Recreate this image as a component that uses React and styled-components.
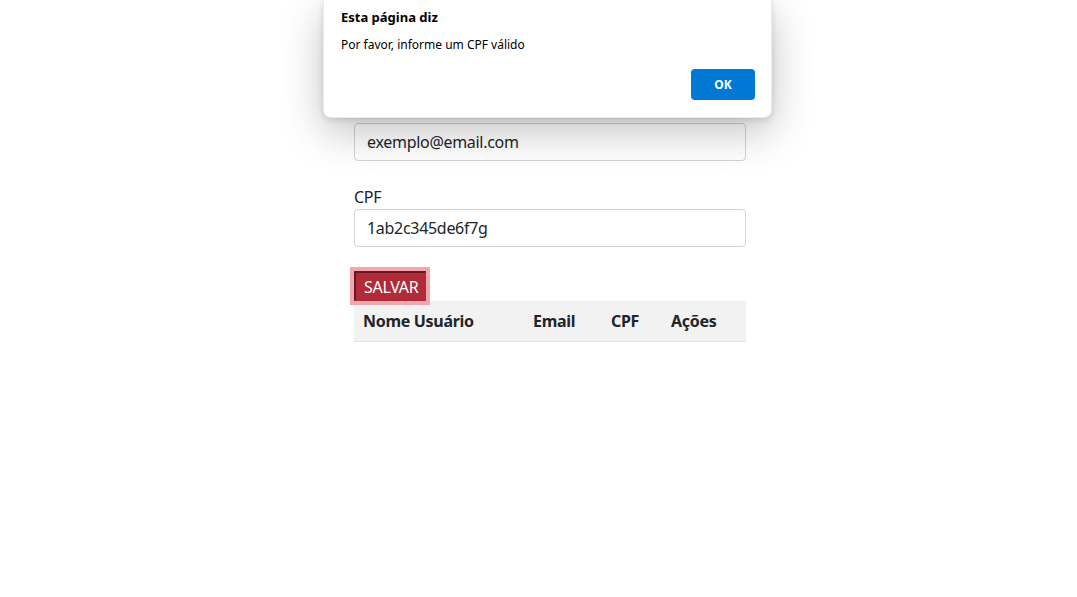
import React from 'react';
import styled, { createGlobalStyle } from 'styled-components';

const GlobalStyle = createGlobalStyle`
  html, body {
    margin:0;
    padding:0;
    background:#fff;
    font-family:"Segoe UI","Noto Sans",sans-serif;
    color:#212529;
  }
  *{ box-sizing:border-box; }
`

const Page = styled.div`
  position:relative;
  width:1077px;
  height:597px;
  overflow:hidden;
`

const Form = styled.form`
  width:392px;
  margin-left:354px;
  padding-top:99px;
  letter-spacing:-0.3px;
`

const Field = styled.div`
  margin-bottom:24px;
`

const Label = styled.label`
  display:block;
  font-size:16px;
  line-height:24px;
`

const Input = styled.input`
  display:block;
  width:100%;
  height:38px;
  padding:6px 12px;
  font:inherit;
  font-size:16px;
  letter-spacing:inherit;
  color:#212529;
  background:#fff;
  border:1px solid #ced4da;
  border-radius:4px;
  outline:none;
`

const SaveButton = styled.button`
  display:block;
  height:30px;
  padding:0 7px 0 8px;
  font:inherit;
  font-size:16px;
  line-height:24px;
  letter-spacing:inherit;
  color:#fff;
  background:#b02a37;
  border-style:solid;
  border-width:2px 1px 1px 2px;
  border-color:#6a1820 #b02a37 #b02a37 #6a1820;
  box-shadow:0 0 0 4px #f0a7ae;
  position:relative;
  z-index:1;
`

const Table = styled.table`
  width:100%;
  border-collapse:collapse;
`

const Th = styled.th`
  width:${p => p.$w}px;
  padding:8px 9px;
  height:40px;
  text-align:left;
  font-size:16px;
  font-weight:700;
  background:#f2f2f2;
  border-bottom:1px solid #dee2e6;
`

const Dialog = styled.div`
  position:absolute;
  top:0;
  left:323px;
  width:449px;
  padding:8px 16px 17px 17px;
  background:#fff;
  border:1px solid rgba(0,0,0,0.08);
  border-top:none;
  border-radius:0 0 8px 8px;
  box-shadow:0 14px 42px rgba(0,0,0,0.24), 0 2px 6px rgba(0,0,0,0.12);
  z-index:10;
  font-family:"Segoe UI","Noto Sans",sans-serif;
  color:#000;
`

const DialogTitle = styled.div`
  font-size:13px;
  line-height:18px;
  font-weight:700;
`

const DialogMessage = styled.div`
  margin-top:10px;
  font-size:12px;
  line-height:18px;
`

const DialogActions = styled.div`
  display:flex;
  justify-content:flex-end;
  margin-top:15px;
`

const OkButton = styled.button`
  width:64px;
  height:31px;
  border:none;
  border-radius:4px;
  background:#0078d4;
  color:#fff;
  font-family:inherit;
  font-size:12px;
  font-weight:700;
`

const columns = [
  { label: 'Nome Usuário', w: 170 },
  { label: 'Email', w: 78 },
  { label: 'CPF', w: 60 },
  { label: 'Ações', w: 84 },
]

export default function App() {
  return (
    <Page>
      <GlobalStyle />
      <Form onSubmit={e => e.preventDefault()}>
        <Field>
          <Label htmlFor="email">Email</Label>
          <Input id="email" defaultValue="exemplo@email.com" />
        </Field>
        <Field>
          <Label htmlFor="cpf">CPF</Label>
          <Input id="cpf" defaultValue="1ab2c345de6f7g" />
        </Field>
        <SaveButton type="submit">SALVAR</SaveButton>
        <Table>
          <thead>
            <tr>
              {columns.map(c => (
                <Th key={c.label} $w={c.w}>{c.label}</Th>
              ))}
            </tr>
          </thead>
        </Table>
      </Form>
      <Dialog role="alertdialog">
        <DialogTitle>Esta página diz</DialogTitle>
        <DialogMessage>Por favor, informe um CPF válido</DialogMessage>
        <DialogActions>
          <OkButton>OK</OkButton>
        </DialogActions>
      </Dialog>
    </Page>
  )
}
